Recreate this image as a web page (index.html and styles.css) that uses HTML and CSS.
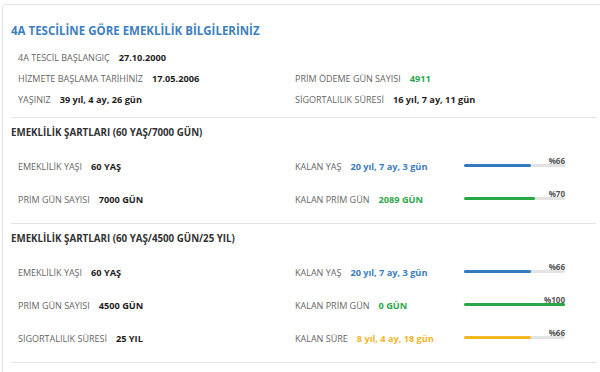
FILE: index.html
```html
<!DOCTYPE html>
<html lang="tr">
<head>
<meta charset="utf-8">
<title>Emeklilik Bilgileri</title>
<link rel="stylesheet" href="styles.css">
</head>
<body>
<div class="card">
  <h2 class="title">4A TESCİLİNE GÖRE EMEKLİLİK BİLGİLERİNİZ</h2>
  <div class="info">
    <div class="cell"><span class="lbl">4A TESCİL BAŞLANGIÇ</span><span class="val">27.10.2000</span></div>
    <div class="cell"></div>
    <div class="cell"><span class="lbl">HİZMETE BAŞLAMA TARİHİNİZ</span><span class="val">17.05.2006</span></div>
    <div class="cell"><span class="lbl">PRİM ÖDEME GÜN SAYISI</span><span class="val green">4911</span></div>
    <div class="cell"><span class="lbl">YAŞINIZ</span><span class="val">39 yıl, 4 ay, 26 gün</span></div>
    <div class="cell"><span class="lbl">SİGORTALILIK SÜRESİ</span><span class="val">16 yıl, 7 ay, 11 gün</span></div>
  </div>

  <section class="sec">
    <h3 class="sec-title">EMEKLİLİK ŞARTLARI (60 YAŞ/7000 GÜN)</h3>
    <div class="rows">
      <div class="cell"><span class="lbl">EMEKLİLİK YAŞI</span><span class="val">60 YAŞ</span></div>
      <div class="cell"><span class="lbl">KALAN YAŞ</span><span class="val blue">20 yıl, 7 ay, 3 gün</span></div>
      <div class="cell barcell"><div class="bar"><div class="fill f-blue" style="width:66%"></div><span class="pct">%66</span></div></div>

      <div class="cell"><span class="lbl">PRİM GÜN SAYISI</span><span class="val">7000 GÜN</span></div>
      <div class="cell"><span class="lbl">KALAN PRİM GÜN</span><span class="val green">2089 GÜN</span></div>
      <div class="cell barcell"><div class="bar"><div class="fill f-green" style="width:70%"></div><span class="pct">%70</span></div></div>
    </div>
  </section>

  <section class="sec">
    <h3 class="sec-title">EMEKLİLİK ŞARTLARI (60 YAŞ/4500 GÜN/25 YIL)</h3>
    <div class="rows">
      <div class="cell"><span class="lbl">EMEKLİLİK YAŞI</span><span class="val">60 YAŞ</span></div>
      <div class="cell"><span class="lbl">KALAN YAŞ</span><span class="val blue">20 yıl, 7 ay, 3 gün</span></div>
      <div class="cell barcell"><div class="bar"><div class="fill f-blue" style="width:66%"></div><span class="pct">%66</span></div></div>

      <div class="cell"><span class="lbl">PRİM GÜN SAYISI</span><span class="val">4500 GÜN</span></div>
      <div class="cell"><span class="lbl">KALAN PRİM GÜN</span><span class="val green">0 GÜN</span></div>
      <div class="cell barcell"><div class="bar"><div class="fill f-green" style="width:100%"></div><span class="pct">%100</span></div></div>

      <div class="cell"><span class="lbl">SİGORTALILIK SÜRESİ</span><span class="val">25 YIL</span></div>
      <div class="cell"><span class="lbl">KALAN SÜRE</span><span class="val orange">8 yıl, 4 ay, 18 gün</span></div>
      <div class="cell barcell"><div class="bar"><div class="fill f-orange" style="width:66%"></div><span class="pct">%66</span></div></div>
    </div>
  </section>
  <div class="end"></div>
</div>
</body>
</html>
```
FILE: styles.css
```css
html, body {
  margin: 0;
  padding: 0;
  background: #ffffff;
  overflow: hidden;
}
body {
  font-family: "Open Sans", "Liberation Sans", sans-serif;
  color: #333;
}
.card {
  margin: 4px 0 0 2px;
  width: 603px;
  box-sizing: border-box;
  border: 1px solid #e4e4e4;
  border-radius: 4px;
  padding: 17px 8px 0 8px;
  box-shadow: 0 1px 2px rgba(0,0,0,0.04);
  background: #fff;
}
.title {
  margin: 0;
  font-size: 11.5px;
  line-height: 18px;
  font-weight: 700;
  color: #3e7fc1;
}
.info {
  display: grid;
  grid-template-columns: 277px 1fr;
  grid-auto-rows: 21px;
  padding: 7px 0 7px 7px;
}
.cell {
  display: flex;
  align-items: center;
  white-space: nowrap;
}
.lbl {
  font-size: 9px;
  color: #666;
  margin-right: 9px;
}
.val {
  font-size: 9.2px;
  font-weight: 700;
  color: #1e1e1e;
}
.green { color: #2ea64c; }
.blue { color: #3a7cc0; }
.orange { color: #f2b52a; }
.sec {
  border-top: 1px solid #e3e3e3;
  padding: 6px 0 7px 0;
}
.sec-title {
  margin: 0;
  font-size: 9.75px;
  line-height: 18px;
  font-weight: 700;
  color: #333;
}
.rows {
  display: grid;
  grid-template-columns: 277px 169px 101px;
  grid-auto-rows: 33px;
  padding-left: 7px;
  margin-top: 8px;
}
.barcell {
  align-items: center;
}
.bar {
  position: relative;
  width: 101px;
  height: 3px;
  margin-bottom: 2px;
  background: #e3e3e3;
  border-radius: 2px;
}
.fill {
  height: 100%;
  border-radius: 2px;
}
.f-blue { background: #3478c0; }
.f-green { background: #27a844; }
.f-orange { background: #f2b824; }
.pct {
  position: absolute;
  right: 0;
  bottom: 1px;
  font-size: 8px;
  line-height: 10px;
  font-weight: 700;
  color: #555;
}
.end {
  border-top: 1px solid #e3e3e3;
  height: 20px;
}
```
